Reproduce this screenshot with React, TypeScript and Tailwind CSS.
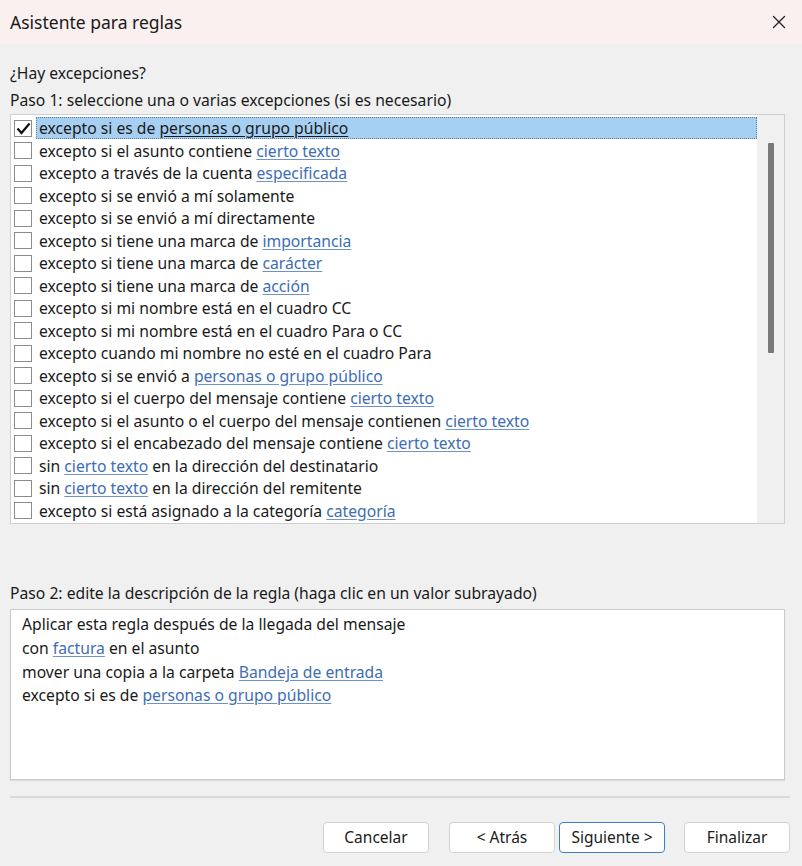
import { X } from "lucide-react";

type Part = string | { link: string };

const rows: Part[][] = [
  ["excepto si es de ", { link: "personas o grupo público" }],
  ["excepto si el asunto contiene ", { link: "cierto texto" }],
  ["excepto a través de la cuenta ", { link: "especificada" }],
  ["excepto si se envió a mí solamente"],
  ["excepto si se envió a mí directamente"],
  ["excepto si tiene una marca de ", { link: "importancia" }],
  ["excepto si tiene una marca de ", { link: "carácter" }],
  ["excepto si tiene una marca de ", { link: "acción" }],
  ["excepto si mi nombre está en el cuadro CC"],
  ["excepto si mi nombre está en el cuadro Para o CC"],
  ["excepto cuando mi nombre no esté en el cuadro Para"],
  ["excepto si se envió a ", { link: "personas o grupo público" }],
  ["excepto si el cuerpo del mensaje contiene ", { link: "cierto texto" }],
  ["excepto si el asunto o el cuerpo del mensaje contienen ", { link: "cierto texto" }],
  ["excepto si el encabezado del mensaje contiene ", { link: "cierto texto" }],
  ["sin ", { link: "cierto texto" }, " en la dirección del destinatario"],
  ["sin ", { link: "cierto texto" }, " en la dirección del remitente"],
  ["excepto si está asignado a la categoría ", { link: "categoría" }],
];

const description: Part[][] = [
  ["Aplicar esta regla después de la llegada del mensaje"],
  ["con ", { link: "factura" }, " en el asunto"],
  ["mover una copia a la carpeta ", { link: "Bandeja de entrada" }],
  ["excepto si es de ", { link: "personas o grupo público" }],
];

function Text({ parts, selected }: { parts: Part[]; selected?: boolean }) {
  return (
    <>
      {parts.map((p, i) =>
        typeof p === "string" ? (
          <span key={i}>{p}</span>
        ) : (
          <span
            key={i}
            className={
              selected
                ? "underline underline-offset-2 text-[#1a1a1a]"
                : "underline underline-offset-2 text-[#3d6db5] decoration-[#6f93c8]"
            }
          >
            {p.link}
          </span>
        )
      )}
    </>
  );
}

function Check({ checked }: { checked: boolean }) {
  return (
    <div className="w-[18px] h-[17px] shrink-0 border border-[#8c8c8c] bg-white flex items-center justify-center">
      {checked && (
        <svg width="15" height="13" viewBox="0 0 15 13">
          <path d="M1.5 6.5 L5.5 11 L13.5 1.5" fill="none" stroke="#111" strokeWidth="2.2" />
        </svg>
      )}
    </div>
  );
}

function Btn({ label, primary }: { label: string; primary?: boolean }) {
  return (
    <button
      className={
        "w-[106px] h-[31px] rounded-[4px] bg-white text-[15.5px] text-[#1a1a1a] " +
        (primary ? "border-[1.5px] border-[#3c7fc4]" : "border border-[#d3d3d3]")
      }
    >
      {label}
    </button>
  );
}

export default function App() {
  return (
    <div
      className="w-[802px] h-[866px] bg-[#f0f0f0] flex flex-col text-[#1a1a1a] overflow-hidden"
      style={{ fontFamily: '"Noto Sans", "Open Sans", sans-serif' }}
    >
      <div className="h-[44px] shrink-0 bg-[#faf0f0] flex items-center justify-between pl-[10px] pr-[12px]">
        <div className="text-[17.5px]">Asistente para reglas</div>
        <X size={22} strokeWidth={1.4} className="text-[#222]" />
      </div>

      <div className="px-[10px] flex flex-col text-[15.7px]">
        <div className="mt-[18px] h-[22px] leading-[22px]">¿Hay excepciones?</div>
        <div className="mt-[5px] h-[22px] leading-[22px]">
          Paso 1: seleccione una o varias excepciones (si es necesario)
        </div>

        <div className="mt-[3px] w-[775px] h-[410px] border border-[#cfcfcf] bg-white flex">
          <div className="flex-1 flex flex-col pt-[2px] pl-[3px]">
            {rows.map((r, i) => (
              <div key={i} className="h-[22.5px] flex items-center gap-[4px]">
                <Check checked={i === 0} />
                <div
                  className={
                    "flex-1 h-[22px] leading-[21px] pl-[2px] whitespace-nowrap " +
                    (i === 0 ? "bg-[#a7cff2] border border-dotted border-[#5a7ea8]" : "border border-transparent")
                  }
                >
                  <Text parts={r} selected={i === 0} />
                </div>
              </div>
            ))}
          </div>
          <div className="w-[27px] bg-[#f0f0f0] flex justify-center pt-[28px]">
            <div className="w-[6px] h-[210px] bg-[#7a7a7a] rounded-[1px]" />
          </div>
        </div>

        <div className="mt-[58px] h-[22px] leading-[22px]">
          Paso 2: edite la descripción de la regla (haga clic en un valor subrayado)
        </div>
        <div className="mt-[5px] w-[775px] h-[171px] border border-[#cbcbcb] bg-white px-[11px] pt-[3px] shadow-[0_1px_1px_rgba(0,0,0,0.08)]">
          {description.map((d, i) => (
            <div key={i} className="h-[23.8px] leading-[23.8px] whitespace-nowrap">
              <Text parts={d} />
            </div>
          ))}
        </div>

        <div className="mt-[16px] w-[780px] h-[2px] bg-[#d9d9d9]" />

        <div className="mt-[24px] flex justify-end pr-[2px]">
          <Btn label="Cancelar" />
          <div className="w-[20px]" />
          <Btn label="< Atrás" />
          <div className="w-[4px]" />
          <Btn label="Siguiente >" primary />
          <div className="w-[19px]" />
          <Btn label="Finalizar" />
        </div>
      </div>
    </div>
  );
}
